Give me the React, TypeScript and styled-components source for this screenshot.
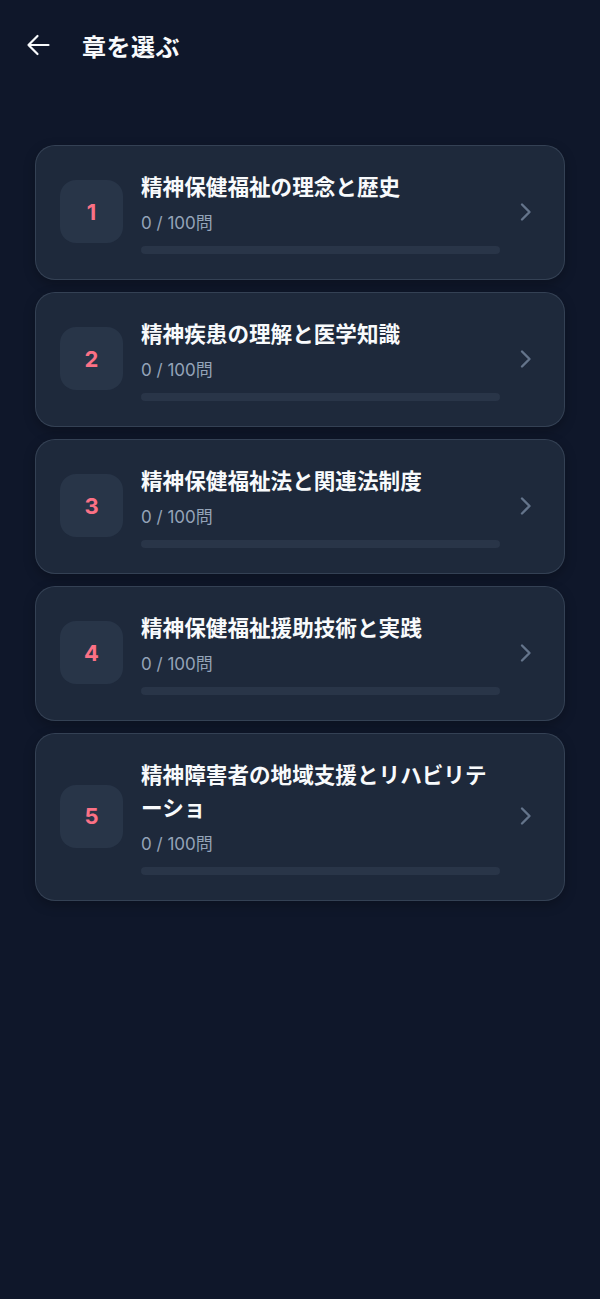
import styled, { createGlobalStyle } from 'styled-components'

const GlobalStyle = createGlobalStyle`
  html, body {
    margin: 0;
    padding: 0;
    background: #0f172a;
  }
  body {
    font-family: Inter, Roboto, "Noto Sans CJK JP", sans-serif;
    color: #f8fafc;
    min-height: 1299px;
  }
`

const Page = styled.div`
	min-height: 1299px;
	background: #0f172a;
`

const Header = styled.header`
	display: flex;
	align-items: center;
	gap: 32px;
	height: 46px;
	padding: 22px 26px 0;
`

const BackButton = styled.button`
	display: flex;
	align-items: center;
	justify-content: center;
	width: 24px;
	height: 24px;
	padding: 0;
	background: none;
	border: none;
	color: #f8fafc;
	cursor: pointer;
`

const PageTitle = styled.h1`
	margin: 0;
	font-size: 24px;
	font-weight: 700;
	letter-spacing: 0.5px;
	color: #f8fafc;
`

const ChapterList = styled.ul`
	list-style: none;
	margin: 0;
	padding: 77px 35px 0;
	display: flex;
	flex-direction: column;
	gap: 12.5px;
`

const Card = styled.li`
	display: flex;
	align-items: center;
	padding: 23px 24px 24.5px;
	border-radius: 20px;
	background: #1e293b;
	border: 1px solid rgba(71, 85, 105, 0.55);
	box-shadow: 0 4px 12px rgba(0, 0, 0, 0.25);
	cursor: pointer;
`

const NumberBox = styled.div`
	flex: 0 0 63px;
	height: 63px;
	display: flex;
	align-items: center;
	justify-content: center;
	border-radius: 16px;
	background: #283548;
	color: #fb7185;
	font-family: Inter, Roboto, sans-serif;
	font-size: 22px;
	font-weight: 700;
`

const Content = styled.div`
	flex: 1;
	min-width: 0;
	margin-left: 18px;
	display: flex;
	flex-direction: column;
`

const ChapterTitle = styled.div`
	font-family: "Noto Sans CJK JP", sans-serif;
	font-size: 21.6px;
	line-height: 33px;
	font-weight: 700;
	color: #f8fafc;
`

const Count = styled.div`
	margin-top: 8px;
	font-family: Inter, "Noto Sans CJK JP", sans-serif;
	font-size: 17px;
	line-height: 26px;
	color: #94a3b8;
`

const Track = styled.div`
	margin-top: 10px;
	height: 8px;
	border-radius: 4px;
	background: #293548;
	overflow: hidden;
`

const Fill = styled.div`
	height: 100%;
	background: #fb7185;
	border-radius: 4px;
`

const Chevron = styled.svg`
	flex: 0 0 24px;
	margin-left: 16px;
	color: #64748b;
`

const chapters = [
	'精神保健福祉の理念と歴史',
	'精神疾患の理解と医学知識',
	'精神保健福祉法と関連法制度',
	'精神保健福祉援助技術と実践',
	'精神障害者の地域支援とリハビリテーショ',
]

function App() {
	return (
		<>
			<GlobalStyle />
			<Page>
				<Header>
					<BackButton aria-label="戻る">
						<svg width="24" height="24" viewBox="0 0 24 24" fill="none">
							<path
								d="M22.5 12H2.5M11.5 3l-9 9 9 9"
								stroke="currentColor"
								strokeWidth="2.2"
								strokeLinecap="round"
								strokeLinejoin="round"
							/>
						</svg>
					</BackButton>
					<PageTitle>章を選ぶ</PageTitle>
				</Header>

				<ChapterList>
					{chapters.map((title, i) => {
						const done = 0
						const total = 100
						return (
							<Card key={title}>
								<NumberBox>{i + 1}</NumberBox>
								<Content>
									<ChapterTitle>{title}</ChapterTitle>
									<Count>
										{done} / {total}問
									</Count>
									<Track>
										<Fill style={{ width: `${(done / total) * 100}%` }} />
									</Track>
								</Content>
								<Chevron width="24" height="24" viewBox="0 0 24 24" fill="none">
									<path
										d="M6 4.5l7.5 7.5L6 19.5"
										stroke="currentColor"
										strokeWidth="2.4"
										strokeLinecap="round"
										strokeLinejoin="round"
									/>
								</Chevron>
							</Card>
						)
					})}
				</ChapterList>
			</Page>
		</>
	)
}

export default App
